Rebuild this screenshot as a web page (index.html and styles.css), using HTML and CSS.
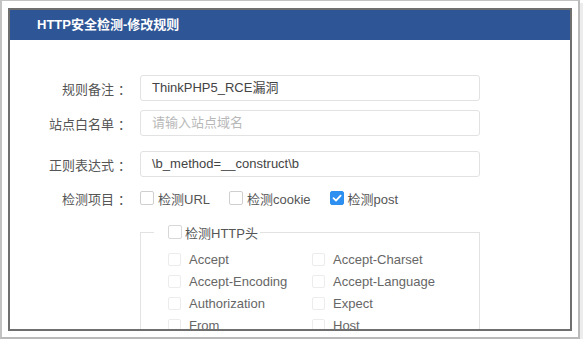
FILE: index.html
```html
<!DOCTYPE html>
<html lang="zh-CN">
<head>
<meta charset="utf-8">
<title>HTTP安全检测-修改规则</title>
<link rel="stylesheet" href="styles.css">
</head>
<body>
<div class="frame">
  <div class="dialog">
    <div class="header">HTTP安全检测-修改规则</div>
    <div class="body">
      <div class="row row-1">
        <label class="label">规则备注<span class="colon">：</span></label>
        <div class="input">ThinkPHP5_RCE漏洞</div>
      </div>
      <div class="row row-2">
        <label class="label">站点白名单<span class="colon">：</span></label>
        <div class="input placeholder">请输入站点域名</div>
      </div>
      <div class="row row-3">
        <label class="label">正则表达式<span class="colon">：</span></label>
        <div class="input">\b_method=__construct\b</div>
      </div>
      <div class="row row-check">
        <label class="label">检测项目<span class="colon">：</span></label>
        <div class="checks">
          <span class="check"><span class="box"></span>检测URL</span>
          <span class="check"><span class="box"></span>检测cookie</span>
          <span class="check"><span class="box checked"><svg viewBox="0 0 14 14" width="14" height="14"><path d="M3.5 7.2 L6 9.6 L10.6 4.6" fill="none" stroke="#fff" stroke-width="1.8" stroke-linecap="round" stroke-linejoin="round"/></svg></span>检测post</span>
        </div>
      </div>
      <fieldset class="headers">
        <legend class="legend"><span class="box"></span>检测HTTP头</legend>
        <div class="grid">
          <span class="hitem"><span class="box light"></span>Accept</span>
          <span class="hitem"><span class="box light"></span>Accept-Charset</span>
          <span class="hitem"><span class="box light"></span>Accept-Encoding</span>
          <span class="hitem"><span class="box light"></span>Accept-Language</span>
          <span class="hitem"><span class="box light"></span>Authorization</span>
          <span class="hitem"><span class="box light"></span>Expect</span>
          <span class="hitem"><span class="box light"></span>From</span>
          <span class="hitem"><span class="box light"></span>Host</span>
        </div>
      </fieldset>
    </div>
  </div>
</div>
</body>
</html>
```

FILE: styles.css
```css
* { box-sizing: border-box; }
html, body {
  margin: 0;
  padding: 0;
  background: #ffffff;
  font-family: "Liberation Sans", "Noto Sans CJK SC", sans-serif;
  font-size: 13px;
  color: #555;
}
.frame {
  width: 580px;
  height: 339px;
  border-top: 1px solid #c2c2c2;
  border-left: 2px solid #c2c2c2;
  border-right: 2px solid #b9b9b9;
  border-bottom: 2px solid #b9b9b9;
  box-shadow: 3px 3px 0 #ececec;
  padding: 7px 6px 6px 6px;
}
.dialog {
  height: 100%;
  border: 2px solid #6f6f6f;
  background: #fff;
  overflow: hidden;
}
.header {
  height: 30px;
  line-height: 30px;
  background: #2e5595;
  color: #fff;
  font-weight: bold;
  padding-left: 27px;
}
.body {
  padding-top: 35px;
}
.row {
  display: flex;
  align-items: center;
}
.row-1 { margin-bottom: 9px; }
.row-2 { margin-bottom: 15px; }
.row-3 { margin-bottom: 11px; }
.label {
  width: 118px;
  text-align: right;
  margin-right: 12px;
  color: #555;
  display: flex;
  justify-content: flex-end;
  align-items: center;
}
.colon {
  display: inline-block;
  width: 14px;
  padding-left: 4px;
  text-align: left;
}
.input {
  width: 340px;
  height: 26px;
  line-height: 24px;
  border: 1px solid #e2e2e2;
  border-radius: 3px;
  padding-left: 11px;
  color: #444;
}
.input.placeholder { color: #b8b8b8; }
.row-check { height: 20px; }
.checks {
  display: flex;
  align-items: center;
}
.check {
  display: inline-flex;
  align-items: center;
  margin-right: 19px;
  color: #555;
}
.check .box { margin-right: 4px; }
.box {
  display: inline-block;
  width: 14px;
  height: 14px;
  border: 1px solid #cfcfcf;
  border-radius: 2px;
  margin-right: 2px;
  background: #fff;
  flex: none;
}
.box.checked {
  background: #2d8ff0;
  border-color: #2d8ff0;
  position: relative;
}
.box.checked svg {
  position: absolute;
  left: -1px;
  top: -1px;
}
.headers {
  margin: 14px 0 0 130px;
  width: 340px;
  border: 1px solid #e2e2e2;
  border-bottom: none;
  padding: 6px 0 0 27px;
  min-width: 0;
}
.legend {
  display: flex;
  align-items: center;
  height: 20px;
  padding: 0 2px 0 14px;
  margin-left: -14px;
  color: #555;
}
.legend .box { border-color: #d8d8d8; margin-right: 3px; }
.grid {
  display: grid;
  grid-template-columns: 144px 160px;
  grid-auto-rows: 22px;
  align-items: center;
}
.hitem {
  display: inline-flex;
  align-items: center;
  color: #666;
}
.box.light {
  border-color: #ececec;
  width: 13px;
  height: 13px;
  margin-right: 8px;
}
```
